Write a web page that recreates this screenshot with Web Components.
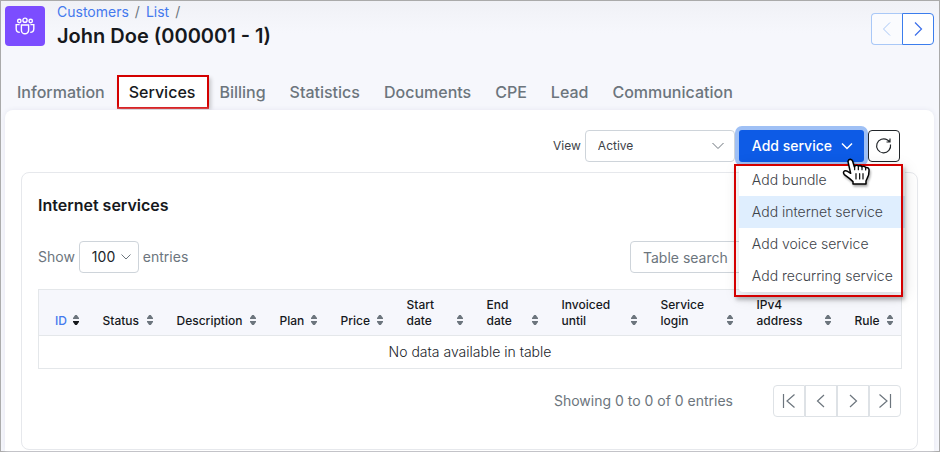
<!DOCTYPE html>
<html lang="en">
<head>
<meta charset="utf-8">
<title>John Doe – Services</title>
<style>
  body { margin: 0; font-family: Inter, "Liberation Sans", sans-serif; font-size: 14px; line-height: 20px; color: #22262b; }
</style>
</head>
<body>
<customer-page></customer-page>

<script>
const define = (name, html) => {
  const template = document.createElement('template');
  template.innerHTML = `<style>*,*::before{box-sizing:border-box} button,input,select{font:inherit;color:inherit;margin:0} svg{display:block;fill:none;stroke:currentColor}</style>` + html;
  customElements.define(name, class extends HTMLElement {
    constructor() {
      super();
      this.attachShadow({ mode: 'open' }).append(template.content.cloneNode(true));
    }
  });
};

define('page-header', `
<style>
  :host { display: flex; align-items: flex-start; gap: 12px; padding: 5px 5px 0 4px; }
  .logo { width: 40px; height: 40px; border-radius: 4px; background: #7c4dff; color: #fff; display: grid; place-items: center; }
  .text { flex: 1; margin-top: -4px; }
  nav { color: #6c757d; line-height: 20px; display: flex; gap: 6px; }
  a { color: #4479ee; text-decoration: none; }
  h1 { margin: 0; font-size: 20px; line-height: 28px; font-weight: 600; color: #16191d; }
  .switch { display: flex; margin-top: 7px; }
  button { width: 32px; height: 32px; padding: 0; display: grid; place-items: center; background: #fff; border: 1px solid #3b7ded; color: #3b6eea; }
  button:first-child { border-radius: 4px 0 0 4px; border-color: #a9c8f7; color: #a9c8f7; background: #fafbfe; border-right: 0; width: 31px; }
  button:last-child { border-radius: 0 4px 4px 0; }
</style>
<span class="logo"><svg width="20" height="18" viewBox="0 0 20 18" stroke-width="1.4">
  <circle cx="10" cy="3.2" r="2.1"/><circle cx="4.3" cy="4" r="1.7"/><circle cx="15.7" cy="4" r="1.7"/>
  <path d="M6.4 8h7.2v5.2a3.6 3.6 0 0 1-7.2 0zM4.6 7.6H1.2v4.2c0 2.2 1.4 3.6 3.6 3.6M15.4 7.6h3.4v4.2c0 2.2-1.4 3.6-3.6 3.6"/></svg></span>
<div class="text">
  <nav aria-label="Breadcrumb"><a href="#customers">Customers</a><span>/</span><a href="#list">List</a><span>/</span></nav>
  <h1><slot></slot></h1>
</div>
<div class="switch">
  <button type="button" disabled aria-label="Previous customer"><svg width="16" height="16" viewBox="0 0 16 16"><path d="M11 1.5 4.5 8l6.5 6.5"/></svg></button>
  <button type="button" aria-label="Next customer"><svg width="16" height="16" viewBox="0 0 16 16" stroke-width="1.2"><path d="M5 1.5 11.500 8 5 14.500"/></svg></button>
</div>`);

define('tab-link', `
<style>
  :host { display: block; }
  a { display: block; padding: 5px 12px; font-size: 16px; line-height: 24px; font-weight: 500; color: #6c757d; text-decoration: none; }
  :host([active]) { margin-right: -2px; }
  :host([active]) a { padding-right: 14px; color: #16191d; background: #fff; box-shadow: inset 0 0 0 2px #d40000, 2px 3px 4px #0003; }
</style>
<a href="#tab"><slot></slot></a>`);

define('tab-bar', `
<style>:host { display: flex; padding: 25px 4px 1px; }</style>
<slot></slot>`);

define('hand-cursor', `
<style>
  :host { display: block; filter: drop-shadow(1px 2px 1px #0005); pointer-events: none; }
</style>
<svg width="28" height="30" viewBox="64 82 84 90" stroke-linejoin="round" stroke-linecap="round">
  <path fill="#fff" stroke="#000" stroke-width="4.500" d="M82 93Q83 86 89 86Q94 87 96 92L101 108Q107 101 113 106Q120 103 124 108Q132 105 135 111Q142 109 145 116Q146 132 140 142L136 151V160H97V153L87 144L71 132Q66 125 71 121Q76 119 82 123L90 128Z"/>
  <path stroke="#000" stroke-width="3.500" d="M106 129V145M117 129V145M127 129V145M102 109V117M113 108V117M124 110V117M135 112V118"/>
</svg>`);

define('service-menu', `
<style>
  :host { display: block; position: relative; }
  .toggle { display: flex; align-items: center; gap: 9px; height: 32px; padding: 0 11px 0 13px; border: 0; border-radius: 3px; background: #0d5be6; color: #fff; font-weight: 500; white-space: nowrap; box-shadow: 0 0 0 4px #9fc0f5; }
  .menu { position: absolute; z-index: 2; top: 34px; left: 0; width: 166px; background: #fff; border-radius: 4px; box-shadow: 0 4px 16px #0002; font-weight: 300; }
  .menu button { display: block; width: 100%; height: 32px; padding: 0 0 0 13px; border: 0; background: none; text-align: left; white-space: nowrap; }
  .menu button.on { background: #dfeefe; }
  .frame { position: absolute; z-index: 3; inset: 0 2px -5px -5px; border: 2px solid #d40000; box-shadow: 2px 3px 4px #0004; pointer-events: none; }
  hand-cursor { position: absolute; z-index: 4; top: 28px; left: 103px; }
</style>
<button type="button" class="toggle" aria-expanded="true">Add service
  <svg width="12" height="8" viewBox="0 0 12 8" stroke-width="1.500"><path d="M1 1.500 6 6.500 11 1.500"/></svg></button>
<div class="menu">
  <button type="button">Add bundle</button>
  <button type="button" class="on">Add internet service</button>
  <button type="button">Add voice service</button>
  <button type="button">Add recurring service</button>
  <div class="frame"></div>
</div>
<hand-cursor></hand-cursor>`);

define('service-toolbar', `
<style>
  :host { display: flex; justify-content: flex-end; align-items: center; gap: 4px; padding-right: 18px; font-size: 12px; color: #3d4248; }
  .pick { position: relative; }
  select { appearance: none; width: 150px; height: 32px; padding: 0 32px 0 12px; background: #fff; border: 1px solid #ced4da; border-radius: 4px; }
  .pick svg { position: absolute; right: 11px; top: 12px; color: #6c757d; pointer-events: none; }
  service-menu { font-size: 14px; }
  .refresh { width: 32px; height: 32px; padding: 0; display: grid; place-items: center; background: #fff; border: 1px solid #212529; border-radius: 4px; color: #212529; }
</style>
<label for="view">View</label>
<span class="pick"><select id="view"><option>Active</option></select>
  <svg width="12" height="8" viewBox="0 0 12 8"><path d="M.5 1 6 6.500 11.500 1"/></svg></span>
<service-menu></service-menu>
<button type="button" class="refresh" aria-label="Refresh"><svg width="18" height="18" viewBox="0 0 18 18" stroke-width="1.200"><path d="M15.500 7.500A7 7 0 1 1 12.500 3L14.500 4.500M15 1.500V5H11.500"/></svg></button>`);

define('sort-arrows', `
<style>
  :host { display: block; color: #6c757d; }
  svg { fill: currentColor; stroke: none; }
  :host([sorted]) .down { fill: #16191d; }
</style>
<svg width="6" height="10" viewBox="0 0 6 10"><path d="M0 4V3L2.200 0H3.800L6 3V4Z"/><path class="down" d="M0 6V7L2.200 10H3.800L6 7V6Z"/></svg>`);

const columns = [['ID', 48], ['Status', 74], ['Description', 103], ['Plan', 61], ['Price', 66], ['Start<br>date', 80],
  ['End<br>date', 75], ['Invoiced<br>until', 99], ['Service<br>login', 96], ['IPv4<br>address', 98], ['Rule', 63]];

define('service-table', `
<style>
  :host { display: block; }
  table { width: 100%; table-layout: fixed; border-collapse: collapse; border: 1px solid #e4e7ea; }
  thead { background: #f6f7fc; }
  th { padding: 7px 8px 6px 16px; vertical-align: bottom; text-align: left; font-size: 12px; line-height: 16px; font-weight: 500; color: #16191d; border-bottom: 1px solid #e4e7ea; }
  th:first-child { color: #4479ee; }
  th div { display: flex; align-items: flex-end; justify-content: space-between; }
  sort-arrows { padding-bottom: 4px; }
  td { height: 33px; padding: 0; text-align: center; font-weight: 300; }
</style>
<table>
  <colgroup>${columns.map(c => `<col style="width:${c[1]}px">`).join('')}</colgroup>
  <thead><tr>${columns.map((c, i) => `<th scope="col"><div><span>${c[0]}</span><sort-arrows${i ? '' : ' sorted'}></sort-arrows></div></th>`).join('')}</tr></thead>
  <tbody><tr><td colspan="11">No data available in table</td></tr></tbody>
</table>`);

define('table-filter', `
<style>
  :host { display: flex; align-items: center; gap: 4px; margin: 24px 0 16px; color: #6c757d; }
  .pick { position: relative; color: #212529; }
  select { appearance: none; width: 60px; height: 32px; padding: 0 0 0 12px; background: #fff; border: 1px solid #ced4da; border-radius: 4px; display: block; }
  .pick svg { position: absolute; right: 8px; top: 13px; color: #6c757d; pointer-events: none; }
  input { margin-left: auto; width: 271px; height: 32px; padding: 0 12px; border: 1px solid #ced4da; border-radius: 4px; background: #fff; }
  input::placeholder { color: #6c757d; opacity: 1; }
</style>
<label for="count">Show</label>
<span class="pick"><select id="count"><option>100</option></select>
  <svg width="10" height="6" viewBox="0 0 10 6"><path d="M.5.5 5 5 9.500.5"/></svg></span>
<span>entries</span>
<input type="text" aria-label="Table search" placeholder="Table search">`);

define('table-pager', `
<style>
  :host { display: flex; justify-content: flex-end; align-items: center; gap: 40px; margin-top: 16px; color: #6c757d; }
  div { display: flex; }
  button { width: 32px; height: 32px; padding: 0; display: grid; place-items: center; background: #fff; border: 1px solid #dee2e6; color: #6c757d; }
  button:first-child { border-radius: 4px 0 0 4px; }
  button:last-child { border-radius: 0 4px 4px 0; }
</style>
<span><slot></slot></span>
<div>
  <button type="button" aria-label="First page"><svg width="16" height="16" viewBox="0 0 16 16" stroke-width="1.200"><path d="M2.500 1V15M13.500 1.500 6 8 13.500 14.500"/></svg></button>
  <button type="button" aria-label="Previous page"><svg width="16" height="16" viewBox="0 0 16 16" stroke-width="1.200"><path d="M11 2 4.500 8 11 14"/></svg></button>
  <button type="button" aria-label="Next page"><svg width="16" height="16" viewBox="0 0 16 16" stroke-width="1.200"><path d="M5 2 11.500 8 5 14"/></svg></button>
  <button type="button" aria-label="Last page"><svg width="16" height="16" viewBox="0 0 16 16" stroke-width="1.200"><path d="M2.500 1.500 10 8 2.500 14.500M13.500 1V15"/></svg></button>
</div>`);

define('service-card', `
<style>
  :host { display: block; margin-top: 10px; padding: 20px 16px 32px; border: 1px solid #e6e8ec; border-radius: 8px; box-sizing: border-box; }
  h2 { margin: 0; font-size: 16px; line-height: 24px; font-weight: 600; color: #16191d; }
</style>
<h2><slot name="title"></slot></h2>
<slot></slot>`);

define('customer-page', `
<style>
  :host { display: flex; flex-direction: column; box-sizing: border-box; min-height: 100vh; border: 1px solid #aaa; background: linear-gradient(#f0f1f6, #f6f7fc 32px); }
  main { flex: 1; margin: 0 5px 0 4px; padding: 20px 16px 0; background: #fff; border-radius: 8px 8px 0 0; box-shadow: 0 0 5px #e4e6f0; }
</style>
<page-header>John Doe (000001 - 1)</page-header>
<tab-bar>
  <tab-link>Information</tab-link><tab-link active>Services</tab-link><tab-link>Billing</tab-link><tab-link>Statistics</tab-link>
  <tab-link>Documents</tab-link><tab-link>CPE</tab-link><tab-link>Lead</tab-link><tab-link>Communication</tab-link>
</tab-bar>
<main>
  <service-toolbar></service-toolbar>
  <service-card>
    <span slot="title">Internet services</span>
    <table-filter></table-filter>
    <service-table></service-table>
    <table-pager>Showing 0 to 0 of 0 entries</table-pager>
  </service-card>
</main>`);
</script>
</body>
</html>
